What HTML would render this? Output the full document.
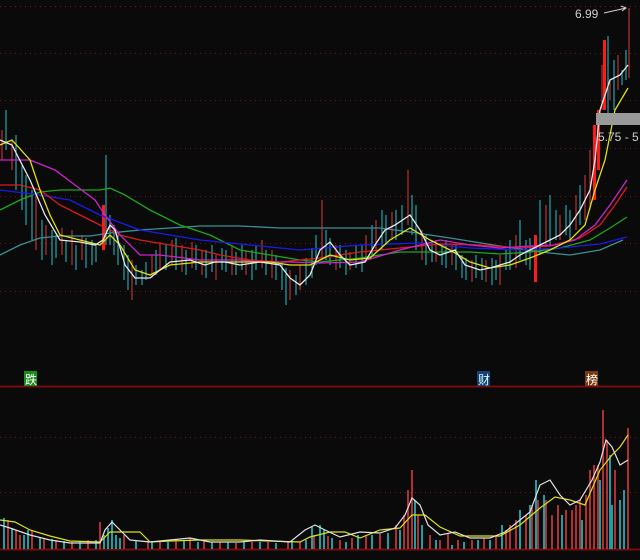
<!DOCTYPE html>
<html><head><meta charset="utf-8"><style>
html,body{margin:0;padding:0;background:#0a0a0a;width:640px;height:560px;overflow:hidden}
svg{display:block}
text{font-family:"Liberation Sans","Noto Sans CJK SC",sans-serif}
</style></head><body>
<svg width="640" height="560" viewBox="0 0 640 560" xmlns="http://www.w3.org/2000/svg">
<rect width="640" height="560" fill="#0a0a0a"/>
<g stroke="#7a1010" stroke-width="1" stroke-dasharray="1,4">
<line x1="0" y1="6.5" x2="640" y2="6.5"/><line x1="0" y1="53.5" x2="640" y2="53.5"/>
<line x1="0" y1="100.5" x2="640" y2="100.5"/><line x1="0" y1="148.5" x2="640" y2="148.5"/>
<line x1="0" y1="196.5" x2="640" y2="196.5"/><line x1="0" y1="243.5" x2="640" y2="243.5"/>
<line x1="0" y1="291.5" x2="640" y2="291.5"/>
<line x1="0" y1="437.5" x2="640" y2="437.5"/><line x1="0" y1="492.5" x2="640" y2="492.5"/>
</g>
<line x1="0" y1="386.5" x2="640" y2="386.5" stroke="#7a0c0c" stroke-width="2"/>
<line x1="0" y1="549.5" x2="640" y2="549.5" stroke="#7a0c0c" stroke-width="2"/>

<g id="candles" stroke-width="1">
<path stroke="#d83a3a" d="M2 130V160M12 140V170M36 195V250M46 225V255M62 228V255M72 230V265M82 235V260M132 260V300M152 255V278M160 242V270M172 240V265M182 245V272M192 242V268M202 250V275M216 255V280M232 245V275M246 250V275M262 240V268M272 250V278M290 270V300M300 265V290M322 200V260M336 245V270M350 252V270M366 235V262M376 220V250M392 212V240M408 170V225M422 230V260M436 240V262M452 245V265M472 260V282M486 260V282M500 255V285M516 235V268M546 205V245M560 215V240M576 195V230M585 175V220M590 150V210M602 65V110M610 80V100M618 55V90M629 8V78"/>
<path stroke="#22c4cc" d="M6 110V150M16 135V190M22 165V210M26 175V225M32 190V240M42 220V260M52 230V265M56 235V258M66 240V262M76 245V270M86 238V268M92 240V265M96 245V262M106 155V245M110 215V245M114 225V255M118 235V265M124 245V280M128 255V290M136 265V285M142 270V285M146 262V280M156 250V275M166 245V270M176 238V270M186 250V275M196 245V270M206 250V278M212 245V272M222 248V270M226 250V272M236 252V275M242 245V270M252 250V280M256 245V270M266 250V275M276 255V280M282 262V290M286 268V305M296 275V295M306 258V285M312 248V278M316 235V265M326 230V260M330 238V265M340 245V268M346 250V275M356 245V268M362 245V272M372 225V255M382 210V250M386 215V245M396 210V240M402 205V235M412 195V235M416 205V250M426 235V265M432 240V262M442 245V265M446 240V268M456 245V270M462 255V278M466 258V280M476 255V278M482 258V280M492 258V285M496 260V280M506 250V270M510 240V270M520 220V260M526 240V265M530 238V270M540 200V255M550 195V245M556 210V240M566 205V235M570 210V240M580 185V225M608 36V113M614 60V110M622 70V85M626 50V80"/>
<rect x="102" y="205" width="3" height="45" fill="#ff1a1a"/>
<rect x="534" y="235" width="3" height="47" fill="#ff1a1a"/>
<rect x="593" y="125" width="3" height="75" fill="#ff1a1a"/>
<rect x="597" y="110" width="3" height="60" fill="#ff1a1a"/>
<rect x="603" y="40" width="3" height="70" fill="#ff1a1a"/>
</g>

<g fill="none" stroke-width="1.3">
<polyline stroke="#3a8f96" points="0,255 20,245 40,238 60,236 90,236 110,233 140,230 170,228 200,226 240,226 280,228 320,228 350,228 380,228 410,232 450,238 500,246 540,252 570,255 600,250 623,240"/>
<polyline stroke="#1aa81a" points="0,210 20,200 40,192 60,190 80,190 100,190 110,188 125,195 150,210 180,225 210,235 240,250 270,255 300,260 320,262 340,260 360,258 400,252 440,252 470,252 500,254 530,252 560,248 590,240 610,228 627,217"/>
<polyline stroke="#1a1aee" points="0,190 40,195 70,200 100,215 140,230 200,240 250,245 300,250 360,245 420,243 470,248 520,250 560,248 600,244 627,237"/>
<polyline stroke="#dd1a1a" points="0,185 20,185 40,190 60,205 80,215 100,225 120,235 140,240 170,245 200,250 220,255 250,260 280,262 320,258 360,252 400,248 440,244 480,245 520,248 550,246 580,238 600,225 615,205 627,187"/>
<polyline stroke="#cc22cc" points="0,160 30,160 55,170 75,185 95,200 105,215 120,235 140,255 160,255 200,260 240,260 260,262 290,262 320,263 360,262 400,250 440,240 470,245 500,248 530,246 555,245 575,240 595,225 610,205 627,180"/>
<polyline stroke="#e0e010" points="0,145 12,140 30,160 40,190 50,215 60,235 80,240 100,245 110,235 120,245 135,270 150,275 170,265 200,262 240,262 270,262 290,265 310,265 330,255 350,260 370,258 390,240 410,228 430,240 450,250 470,262 490,268 510,265 530,258 550,250 570,240 585,225 595,190 605,160 615,110 628,88"/>
<polyline stroke="#e8e8e8" points="0,140 12,145 30,180 45,215 60,240 80,242 95,245 103,240 110,225 115,230 125,265 135,278 150,278 160,270 170,262 190,260 205,265 215,262 225,262 240,265 260,262 280,265 290,278 300,285 310,275 320,250 330,242 340,255 350,265 365,262 375,245 385,230 395,225 410,215 420,230 430,250 440,255 455,250 465,265 480,270 490,268 500,265 510,262 520,255 530,250 540,245 550,240 560,235 570,225 580,210 590,190 595,160 600,110 610,80 620,75 628,65"/>
</g>

<rect x="596" y="113" width="44" height="12" fill="#9a9a9a"/>
<text x="598" y="141" font-size="12" fill="#cfcfcf">5.75 - 5</text>
<text x="575" y="18" font-size="12" fill="#cfcfcf">6.99</text>
<path d="M604 13L626 8M621 6L626 8L622 11" stroke="#cfcfcf" fill="none"/>

<rect x="24" y="371" width="13" height="15" fill="#1a8a1a"/>
<text x="25" y="384" font-size="12" fill="#fff">跌</text>
<rect x="477" y="371" width="13" height="15" fill="#1a3f78"/>
<text x="478" y="384" font-size="12" fill="#cfe">财</text>
<rect x="585" y="371" width="13" height="15" fill="#7a3a10"/>
<text x="586" y="384" font-size="12" fill="#fff">榜</text>

<g stroke-width="1.6">
<path stroke="#d83a3a" d="M8 549V520M16 549V530M20 549V535M32 549V530M44 549V538M56 549V540M72 549V542M88 549V540M100 549V522M124 549V535M148 549V541M160 549V542M176 549V540M190 549V538M204 549V541M220 549V542M236 549V543M252 549V542M268 549V542M288 549V541M300 549V542M314 549V535M328 549V536M340 549V540M352 549V538M366 549V536M380 549V534M396 549V525M404 549V515M408 549V490M412 549V470M418 549V515M430 549V535M440 549V540M448 549V533M458 549V540M472 549V540M484 549V538M496 549V535M506 549V530M510 549V525M516 549V520M526 549V515M532 549V505M538 549V500M546 549V500M552 549V515M558 549V505M566 549V510M572 549V510M576 549V505M580 549V500M586 549V495M590 549V470M594 549V465M598 549V465M603 549V410M607 549V440M615 549V470M628 549V428"/>
<path stroke="#22c4cc" d="M4 549V518M12 549V528M24 549V535M28 549V530M40 549V537M52 549V539M64 549V541M80 549V541M96 549V540M104 549V535M108 549V528M112 549V520M116 549V535M120 549V538M136 549V540M152 549V542M168 549V542M184 549V541M198 549V542M212 549V542M228 549V542M244 549V542M260 549V542M276 549V543M292 549V541M306 549V540M312 549V527M320 549V525M324 549V530M332 549V538M346 549V542M358 549V535M372 549V535M388 549V533M400 549V530M415 549V500M422 549V525M436 549V540M452 549V545M464 549V542M478 549V540M490 549V540M502 549V525M520 549V510M530 549V505M536 549V480M544 549V495M562 549V515M582 549V520M600 549V480M610 549V455M612 549V505M620 549V500M624 549V490"/>
</g>
<g fill="none" stroke-width="1.2">
<polyline stroke="#e0e010" points="0,520 15,522 30,530 50,536 70,541 100,542 110,532 125,532 140,532 150,542 170,541 200,540 240,540 300,542 310,537 330,532 345,532 360,538 380,530 400,528 412,515 425,515 440,527 460,536 480,536 500,536 520,525 540,508 555,497 570,500 585,505 600,470 612,455 620,447 628,435"/>
<polyline stroke="#e0e0e0" points="0,525 10,528 30,535 50,540 70,543 100,543 105,530 112,522 120,530 130,540 150,542 170,540 190,538 210,542 240,542 260,540 290,542 305,530 315,525 325,530 340,537 360,532 380,533 395,528 405,515 412,498 420,505 428,525 440,535 455,532 470,538 490,538 505,532 520,520 530,512 540,485 550,480 560,495 570,505 580,500 592,480 600,462 606,440 612,447 620,465 628,460"/>
</g>
</svg>
</body></html>
